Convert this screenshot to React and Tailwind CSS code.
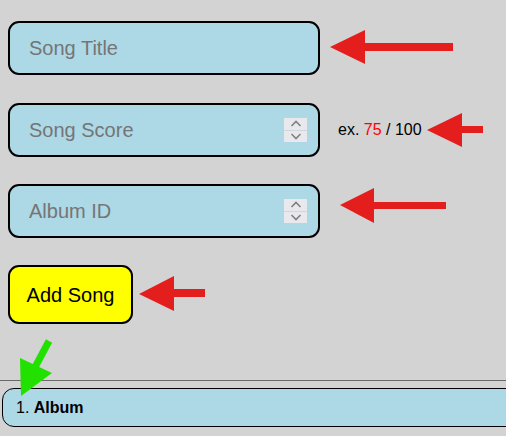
import React, { useState } from 'react';

const font = { fontFamily: '"Liberation Sans", Arial, sans-serif' };

const Spinner = () => (
  <div className="absolute right-[13px] top-1/2 -translate-y-1/2 w-[23px] h-[24px] bg-[#e9e9ed] flex flex-col pointer-events-none">
    <div className="flex-1 flex items-center justify-center border-b border-[#cfd6dc]">
      <svg width="12" height="7" viewBox="0 0 12 7">
        <path d="M1.5 6 L6 1.5 L10.5 6" fill="none" stroke="#808080" strokeWidth="1.6" />
      </svg>
    </div>
    <div className="flex-1 flex items-center justify-center">
      <svg width="12" height="7" viewBox="0 0 12 7">
        <path d="M1.5 1 L6 5.5 L10.5 1" fill="none" stroke="#808080" strokeWidth="1.6" />
      </svg>
    </div>
  </div>
);

const inputClass =
  'w-[312px] h-[54px] bg-[#add8e6] border-2 border-black rounded-[11px] pl-[19px] pr-[44px] text-[20px] text-black placeholder:text-[#757575] outline-none [appearance:textfield] [&::-webkit-inner-spin-button]:appearance-none [&::-webkit-outer-spin-button]:appearance-none';

const Arrows = () => (
  <svg className="absolute inset-0 pointer-events-none" width="506" height="436" viewBox="0 0 506 436">
    <g fill="#e41d1d">
      <polygon points="330,47 365,30 365,43 453,43 453,51 365,51 365,64" />
      <polygon points="427,130 462,113 462,126 483,126 483,133 462,133 462,147" />
      <polygon points="340,205 374,188 374,202 446,202 446,209 374,209 374,223" />
      <polygon points="139,294 174,276 174,289 205,289 205,297 174,297 174,311" />
    </g>
    <g fill="#22e000">
      <line x1="49" y1="341" x2="33" y2="371" stroke="#22e000" strokeWidth="7" />
      <polygon points="21,396 20,358 52,373" />
    </g>
  </svg>
);

export default function App() {
  const [title, setTitle] = useState('');
  const [score, setScore] = useState('');
  const [albumId, setAlbumId] = useState('');
  const albums = [{ id: 1, name: 'Album' }];

  return (
    <div className="relative w-full min-h-screen h-[436px] bg-[#d3d3d3] overflow-hidden" style={font}>
      <div className="flex flex-col pl-[8px] pt-[21px]">
        <input
          type="text"
          value={title}
          onChange={(e) => setTitle(e.target.value)}
          placeholder="Song Title"
          className={inputClass}
        />
        <div className="flex items-center mt-[28px]">
          <div className="relative">
            <input
              type="number"
              value={score}
              onChange={(e) => setScore(e.target.value)}
              placeholder="Song Score"
              className={inputClass}
            />
            <Spinner />
          </div>
          <span className="ml-[18px] text-[16px] text-black">
            ex. <span className="text-[#ff0000]">75</span> / 100
          </span>
        </div>
        <div className="relative w-[312px] mt-[27px]">
          <input
            type="number"
            value={albumId}
            onChange={(e) => setAlbumId(e.target.value)}
            placeholder="Album ID"
            className={inputClass}
          />
          <Spinner />
        </div>
        <button
          type="button"
          className="mt-[27px] w-[125px] h-[59px] bg-[#ffff00] border-2 border-black rounded-[11px] text-[20px] text-black"
        >
          Add Song
        </button>
      </div>
      <div className="mt-[56px] border-t border-[#6a6a6a]" />
      <ul className="mt-[7px] pl-[2px]">
        {albums.map((album) => (
          <li
            key={album.id}
            className="w-[540px] h-[39px] bg-[#add8e6] border border-black rounded-l-[12px] flex items-center pl-[13px] text-[16px] text-black"
          >
            {album.id}.&nbsp;<b>{album.name}</b>
          </li>
        ))}
      </ul>
      <Arrows />
    </div>
  );
}
